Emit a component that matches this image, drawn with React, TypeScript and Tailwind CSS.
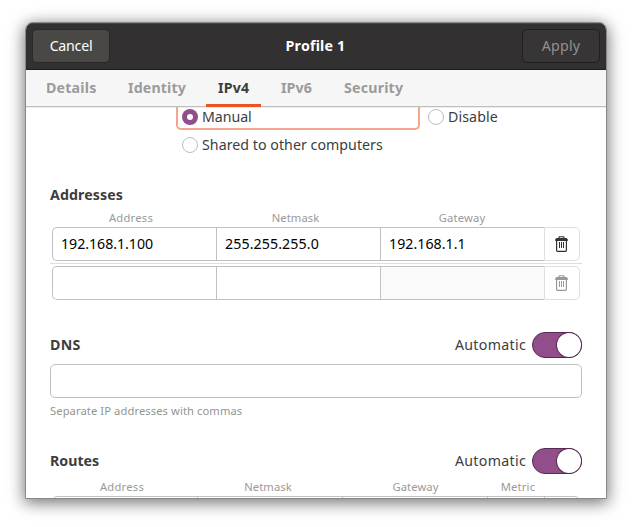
import React from "react";

function Trash({ className }: { className: string }) {
  return (
    <svg width="13" height="16" viewBox="0 0 13 16" fill="currentColor" className={className}>
      <path d="M3.5 2V1q0-.8.8-.8h4.4q.8 0 .8.8v1h2l1.3 1.3V5H.2V3.3L1.5 2zM4.7 1.2V2h3.6v-.8z" fillRule="evenodd" />
      <path d="M1.6 4.5v10q0 .8.8.8h8.2q.8 0 .8-.8v-10" fill="none" stroke="currentColor" strokeWidth="1.2" />
      <path d="M4 6h1v6H4zM6 6h1v6H6zM8 6h1v6H8z" />
    </svg>
  );
}

function Radio({ checked = false }: { checked?: boolean }) {
  return checked ? (
    <span className="flex size-4 shrink-0 items-center justify-center rounded-full bg-[#924d8b]">
      <span className="size-[6px] rounded-full bg-white" />
    </span>
  ) : (
    <span className="size-4 shrink-0 rounded-full border border-[#bdbdbd] bg-white" />
  );
}

function Switch() {
  return (
    <div className="flex h-[26px] w-[50px] justify-end rounded-full border border-[#562a52] bg-[#924d8b]">
      <div className="size-6 rounded-full bg-white shadow-[0_0_0_1px_#562a52]" />
    </div>
  );
}

function AddressRow({ values, disabled = false }: { values: string[]; disabled?: boolean }) {
  return (
    <div className="ml-[2px] flex h-[34px] w-[528px] text-black">
      <div className="w-[164px] rounded-l-[5px] border border-r-0 border-[#c1c1c1] pl-2 leading-[32px]">
        <span className="tracking-[-0.04px]">{values[0]}</span>
      </div>
      <div className="w-[164px] border border-r-0 border-[#c1c1c1] pl-2 leading-[32px]">
        <span className="tracking-[0.1px]">{values[1]}</span>
      </div>
      <div className={"w-[164px] border border-r-0 border-[#c1c1c1] pl-2 leading-[32px] " + (disabled ? "bg-[#fafafa]" : "bg-white")}>
        <span className="tracking-[0.04px]">{values[2]}</span>
      </div>
      <div className="flex w-9 items-center justify-center rounded-r-[5px] border border-[#dfdfdf]">
        <Trash className={disabled ? "mr-px text-[#999]" : "mr-px text-[#333]"} />
      </div>
    </div>
  );
}

function SectionHead({ title, tracking }: { title: string; tracking: string }) {
  return (
    <div className="flex h-[26px] items-center">
      <h2 className={"grow font-bold " + tracking}>{title}</h2>
      <span className="mr-[6px] tracking-[0.3px]">Automatic</span>
      <Switch />
    </div>
  );
}

export default function App() {
  return (
    <div className="h-[527px] w-[632px] overflow-hidden bg-white pt-[22px] pl-[25px] font-['Noto_Sans',sans-serif] text-[14.2px] leading-5 whitespace-nowrap text-[#3d3d3d]">
      <div className="flex h-[477px] w-[582px] flex-col overflow-hidden rounded-t-[8px] border border-[#898989] bg-white shadow-[0_3px_16px_1px_rgba(0,0,0,0.55)]">
        <header className="flex h-[47px] shrink-0 items-center justify-between border-b border-[#1d1b1c] bg-[#323030] pr-[6px] pl-[7px] text-white shadow-[inset_0_1px_0_#484647]">
          <button className="h-8 w-[76px] rounded-[4px] bg-[#494845] shadow-[0_0_0_1px_#2a2828] tracking-[-0.25px]">Cancel</button>
          <h1 className="font-bold tracking-[0.2px]">Profile 1</h1>
          <button className="h-[34px] w-[78px] rounded-[5px] border border-[#211f20] bg-[#373535] tracking-[0.2px] text-[#929191]">Apply</button>
        </header>

        <nav className="flex h-[37px] shrink-0 border-b border-[#bfbfbf] bg-[#f6f6f6] pl-[20px] font-bold leading-9 text-[#9b9b9b]">
          <div className="w-[82px] tracking-[0.2px]">Details</div>
          <div className="w-[78px] tracking-[0.15px]">Identity</div>
          <div className="relative -mb-px h-[37px] w-[55px] border-b-[3px] border-[#e95420] pl-[12px] tracking-[0.2px] text-[#3d3d3d]">IPv4</div>
          <div className="w-[83px] pl-[20px] tracking-[0.1px]">IPv6</div>
          <div className="tracking-[0.2px]">Security</div>
        </nav>

        <main className="min-h-0 grow overflow-hidden pl-6 shadow-[inset_0_1px_0_#ededed]">
          <div className="ml-[126px] flex h-6 items-start">
            <div className="h-[23px] w-[244px] rounded-b-[5px] border-2 border-t-0 border-[#f4a58d] pl-1">
              <div className="flex h-5 items-center gap-1"><Radio checked /><span className="tracking-[-0.05px]">Manual</span></div>
            </div>
            <div className="ml-2 flex h-5 items-center gap-1"><Radio /><span className="tracking-[0.1px]">Disable</span></div>
          </div>
          <div className="mt-1 ml-[132px] flex h-5 items-center gap-1"><Radio /><span className="tracking-[0.04px]">Shared to other computers</span></div>

          <h2 className="mt-[30px] font-bold tracking-[0.1px]">Addresses</h2>
          <div className="mt-[5px] flex h-[15px] text-[11.2px] leading-[15px] text-[#999]">
            <div className="w-[162px] text-center"><span className="tracking-[0.25px]">Address</span></div>
            <div className="w-[167px] text-center"><span className="tracking-[0.1px]">Netmask</span></div>
            <div className="w-[166px] text-center"><span className="tracking-[0.2px]">Gateway</span></div>
          </div>
          <div className="mt-[2px]"><AddressRow values={["192.168.1.100", "255.255.255.0", "192.168.1.1"]} /></div>
          <div className="mt-[2px] mb-[2px] h-px w-[532px] bg-[#dedede]" />
          <AddressRow values={["", "", ""]} disabled />

          <section className="mt-8 w-[532px]">
            <SectionHead title="DNS" tracking="tracking-[0.25px]" />
            <div className="mt-[6px] h-[34px] rounded-[5px] border border-[#c1c1c1]" />
            <div className="mt-[5px] text-[11.2px] leading-4 tracking-[0.09px] text-[#929591]">Separate IP addresses with commas</div>
          </section>

          <section className="mt-[29px] w-[532px]">
            <SectionHead title="Routes" tracking="tracking-[0px]" />
            <div className="mt-[5px] flex h-[15px] text-[11.2px] leading-[15px] text-[#999]">
              <div className="w-[144px] text-center"><span className="tracking-[0.25px]">Address</span></div>
              <div className="w-[148px] text-center"><span className="tracking-[0.1px]">Netmask</span></div>
              <div className="w-[147px] text-center"><span className="tracking-[0.1px]">Gateway</span></div>
              <div className="w-[58px] text-center"><span className="tracking-[0.2px]">Metric</span></div>
            </div>
            <div className="mt-[2px] ml-[2px] flex h-[34px] w-[528px] rounded-[5px] border border-[#c1c1c1]">
              <div className="w-[145px] border-r border-[#c1c1c1]" />
              <div className="w-[145px] border-r border-[#c1c1c1]" />
              <div className="w-[145px] border-r border-[#c1c1c1]" />
              <div className="w-[57px] border-r border-[#c1c1c1]" />
            </div>
          </section>
        </main>
      </div>
    </div>
  );
}
